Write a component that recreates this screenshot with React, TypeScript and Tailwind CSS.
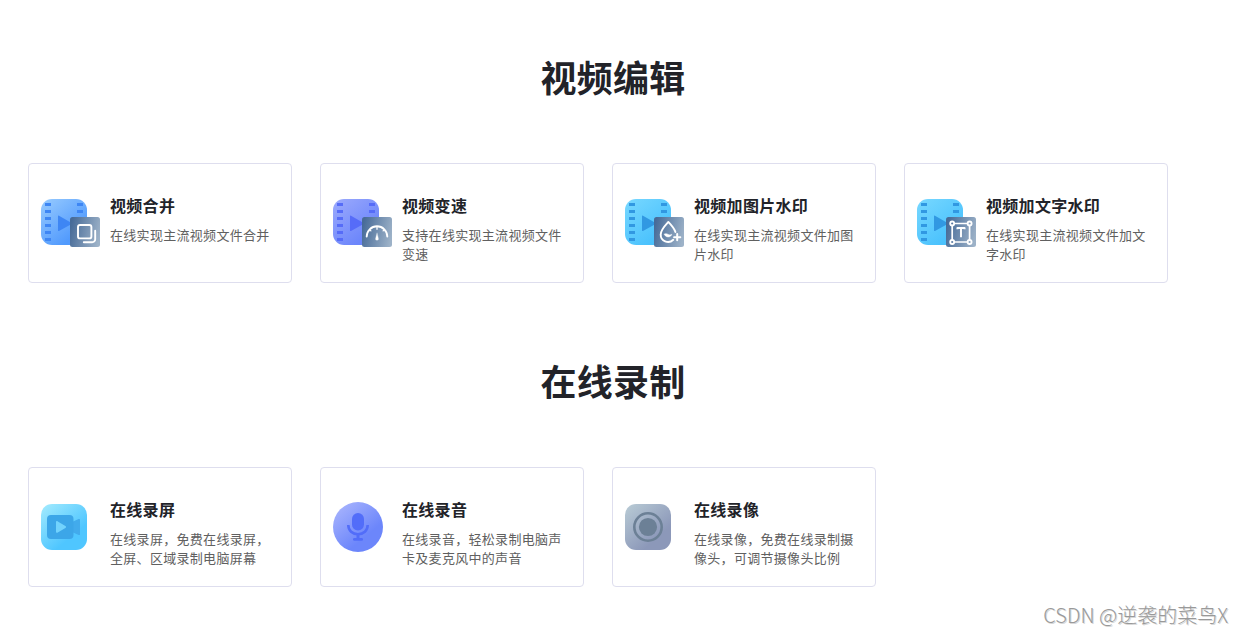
import React from 'react';

type Tool = {
  title: string;
  desc: string[];
  icon: React.ReactNode;
};

type FilmProps = {
  id: string;
  from: string;
  to: string;
  mark: string;
  children: React.ReactNode;
};

const HOLES = [4, 11, 18, 25, 32, 39];

// Film strip with a small badge on its lower right corner
const FilmIcon: React.FC<FilmProps> = ({ id, from, to, mark, children }) => (
  <svg width="59" height="48" viewBox="0 0 59 48" fill="none">
    <defs>
      <linearGradient id={`${id}-bg`} x1="3" y1="3" x2="32" y2="38" gradientUnits="userSpaceOnUse">
        <stop stopColor={from} />
        <stop offset="1" stopColor={to} />
      </linearGradient>
      <linearGradient id={`${id}-badge`} x1="29" y1="29" x2="59" y2="36" gradientUnits="userSpaceOnUse">
        <stop stopColor="#476b98" />
        <stop offset="1" stopColor="#9db2c8" />
      </linearGradient>
    </defs>
    <rect width="46" height="46" rx="11" fill={`url(#${id}-bg)`} />
    {HOLES.map((y) => (
      <rect key={y} x="4" y={y} width="6" height="3" fill={mark} />
    ))}
    <rect x="36" y="4" width="6" height="3" fill={mark} />
    <rect x="36" y="11" width="6" height="3" fill={mark} />
    <path d="M17 17.2c0-.6.5-.8 1-.5l13.5 7.8L18 32c-.5.3-1 0-1-.5z" fill={mark} />
    <rect x="29" y="18" width="30" height="30" rx="2.5" fill={`url(#${id}-badge)`} />
    <g stroke="#fff" strokeLinecap="round" strokeLinejoin="round">
      {children}
    </g>
  </svg>
);

const editTools: Tool[] = [
  {
    title: '视频合并',
    desc: ['在线实现主流视频文件合并'],
    icon: (
      <FilmIcon id="merge" from="#92c7fe" to="#519afd" mark="#3e86f4">
        <rect x="37" y="26" width="13.4" height="13.4" rx="2" strokeWidth="1.9" />
        <path d="M54.2 31.8v8.4a3 3 0 0 1-3 3h-8.4" strokeWidth="1.9" />
      </FilmIcon>
    ),
  },
  {
    title: '视频变速',
    desc: ['支持在线实现主流视频文件', '变速'],
    icon: (
      <FilmIcon id="speed" from="#98a7fc" to="#6c86fb" mark="#566cf8">
        <path d="M33.7 37.6a10.3 10.3 0 0 1 20.6 0" strokeWidth="1.9" />
        <path d="M44 28v2.3M36.6 30.6l1.3 1.3M51.4 30.6l-1.3 1.3" strokeWidth="1.3" />
        <path d="M44 34.2l-1.4 5.3a1.45 1.45 0 1 0 2.8 0z" fill="#fff" strokeWidth=".3" />
      </FilmIcon>
    ),
  },
  {
    title: '视频加图片水印',
    desc: ['在线实现主流视频文件加图', '片水印'],
    icon: (
      <FilmIcon id="image" from="#74d6ff" to="#4bc2fd" mark="#3198e2">
        <path
          d="M48.3 40.8a7.4 7.4 0 0 1-12.6-5.4c0-4.4 4.2-8.8 7.6-12.5 2.9 3 6.2 6.7 7.1 10.2"
          strokeWidth="1.9"
        />
        <path d="M39.4 35.2c1.4-.8 2.5-.5 3.7.2s2.4.6 3.7-.1c-.5 1.7-1.8 2.6-3.7 2.6s-3.2-1-3.7-2.7z" fill="#fff" strokeWidth=".5" />
        <path d="M52.2 35.1v6.2M49.1 38.2h6.2" strokeWidth="2" />
      </FilmIcon>
    ),
  },
  {
    title: '视频加文字水印',
    desc: ['在线实现主流视频文件加文', '字水印'],
    icon: (
      <FilmIcon id="text" from="#74d6ff" to="#4bc2fd" mark="#3198e2">
        <path d="M37.4 24.5h13M37.4 43h13M35.2 26.7v14.1M52.6 26.7v14.1" strokeWidth="1.7" />
        <circle cx="35.2" cy="24.5" r="2" strokeWidth="1.8" />
        <circle cx="52.6" cy="24.5" r="2" strokeWidth="1.8" />
        <circle cx="35.2" cy="43" r="2" strokeWidth="1.8" />
        <circle cx="52.6" cy="43" r="2" strokeWidth="1.8" />
        <path d="M40.4 30.2v-1.2h7.2v1.2M44 29V38.2" strokeWidth="1.9" strokeLinecap="butt" />
      </FilmIcon>
    ),
  },
];

const recordTools: Tool[] = [
  {
    title: '在线录屏',
    desc: ['在线录屏，免费在线录屏，', '全屏、区域录制电脑屏幕'],
    icon: (
      <svg width="46" height="46" viewBox="0 0 46 46" fill="none">
        <defs>
          <linearGradient id="screen-bg" x1="2" y1="2" x2="29" y2="34" gradientUnits="userSpaceOnUse">
            <stop stopColor="#9fe9fe" />
            <stop offset="1" stopColor="#4fc6ff" />
          </linearGradient>
        </defs>
        <rect width="46" height="46" rx="11" fill="url(#screen-bg)" />
        <path d="M31 18l6.7-3c.8-.3 1.3 0 1.3.8v14.4c0 .8-.5 1.1-1.3.8L31 28z" fill="#42abec" />
        <rect x="6" y="11" width="26.5" height="24" rx="4" fill="#3ca6e8" />
        <path d="M15 18.4c0-1.2.8-1.6 1.8-1l7.6 4.6c.9.6.9 1.4 0 2l-7.6 4.5c-1 .6-1.8.2-1.8-1z" fill="#72d3fd" />
      </svg>
    ),
  },
  {
    title: '在线录音',
    desc: ['在线录音，轻松录制电脑声', '卡及麦克风中的声音'],
    icon: (
      <svg width="50" height="50" viewBox="0 0 50 50" fill="none">
        <defs>
          <linearGradient id="audio-bg" x1="6" y1="6" x2="31" y2="36" gradientUnits="userSpaceOnUse">
            <stop stopColor="#a3b0fd" />
            <stop offset="1" stopColor="#6c86fb" />
          </linearGradient>
        </defs>
        <circle cx="25" cy="25" r="25" fill="url(#audio-bg)" />
        <rect x="19" y="11" width="12" height="17.5" rx="6" fill="#526df9" />
        <path d="M15.3 23c0 5.6 4.2 9.2 9.7 9.2s9.7-3.6 9.7-9.2" stroke="#526df9" strokeWidth="2.6" />
        <path d="M25 32v4" stroke="#526df9" strokeWidth="3" />
        <rect x="20" y="35.9" width="10" height="2.9" rx="1.4" fill="#526df9" />
      </svg>
    ),
  },
  {
    title: '在线录像',
    desc: ['在线录像，免费在线录制摄', '像头，可调节摄像头比例'],
    icon: (
      <svg width="46" height="46" viewBox="0 0 46 46" fill="none">
        <defs>
          <linearGradient id="camera-bg" x1="2" y1="2" x2="31" y2="35" gradientUnits="userSpaceOnUse">
            <stop stopColor="#b7c9d4" />
            <stop offset="1" stopColor="#8c98b9" />
          </linearGradient>
        </defs>
        <rect width="46" height="46" rx="11" fill="url(#camera-bg)" />
        <circle cx="23" cy="23" r="13.7" stroke="#6c8096" strokeWidth="2.6" />
        <circle cx="23" cy="23" r="9.1" fill="#6c8096" />
      </svg>
    ),
  },
];

const Card: React.FC<{ tool: Tool }> = ({ tool }) => (
  <div className="flex h-[120px] w-[264px] rounded border border-[#dedeee] bg-white pl-3">
    <div className="flex h-[118px] w-[69px] shrink-0 items-center">{tool.icon}</div>
    <div className="pt-[29px] tracking-[0.3px] whitespace-nowrap">
      <h3 className="text-base leading-6 font-bold text-[#222329]">{tool.title}</h3>
      <p className="mt-2 text-[13px] leading-[19px] text-[#606060]">
        {tool.desc.map((line) => (
          <span key={line} className="block">
            {line}
          </span>
        ))}
      </p>
    </div>
  </div>
);

const Section: React.FC<{ title: string; tools: Tool[] }> = ({ title, tools }) => (
  <section className="h-[304px] w-[1170px] pt-[50px]">
    <h2 className="text-center text-4xl leading-[52px] font-bold tracking-[0.3px] text-[#222329]">{title}</h2>
    <div className="mt-[61px] flex gap-7">
      {tools.map((tool) => (
        <Card key={tool.title} tool={tool} />
      ))}
    </div>
  </section>
);

const App: React.FC = () => {
  return (
    <div className="relative h-[634px] w-[1243px] overflow-hidden bg-white pl-7 font-['Noto_Sans_CJK_SC',sans-serif]">
      <Section title="视频编辑" tools={editTools} />
      <Section title="在线录制" tools={recordTools} />

      {/* Watermark */}
      <div className="absolute right-[15px] bottom-[5px] text-[20px] leading-7 font-light whitespace-nowrap text-[#999999] [text-shadow:1px_1px_0_#d8d8d8]">
        CSDN @逆袭的菜鸟X
      </div>
    </div>
  );
};

export default App;
